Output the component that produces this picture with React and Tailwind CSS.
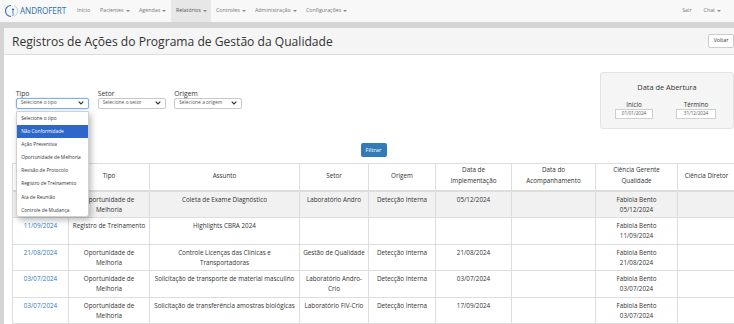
import React from "react";

const navItems = [
  { name: "Início", w: "w-[23px]" },
  { name: "Pacientes", w: "w-[39px]", caret: true },
  { name: "Agendas", w: "w-[37px]", caret: true },
  { name: "Relatórios", w: "w-[40px]", caret: true, active: true },
  { name: "Controles", w: "w-[39px]", caret: true },
  { name: "Administração", w: "w-[51px]", caret: true },
  { name: "Configurações", w: "w-[52px]", caret: true },
];

const tipoOptions = [
  "Selecione o tipo",
  "Não Conformidade",
  "Ação Preventiva",
  "Oportunidade de Melhoria",
  "Revisão de Protocolo",
  "Registro de Treinamento",
  "Ata de Reunião",
  "Controle de Mudança",
];

const columns = [
  { label: ["Data de", "Abertura"], w: "w-[56px]" },
  { label: ["Tipo"], w: "w-[81px]" },
  { label: ["Assunto"], w: "w-[150px]" },
  { label: ["Setor"], w: "w-[69px]" },
  { label: ["Origem"], w: "w-[67px]" },
  { label: ["Data de", "Implementação"], w: "w-[76px]" },
  { label: ["Data do", "Acompanhamento"], w: "w-[84px]" },
  { label: ["Ciência Gerente", "Qualidade"], w: "w-[82px]" },
  { label: ["Ciência Diretor"], w: "w-[58px]" },
];

const rows = [
  {
    hl: true,
    cells: [
      ["05/12/2024"],
      ["Oportunidade de", "Melhoria"],
      ["Coleta de Exame Diagnóstico"],
      ["Laboratório Andro"],
      ["Detecção Interna"],
      ["05/12/2024"],
      [],
      ["Fabiola Bento", "05/12/2024"],
      [],
    ],
  },
  {
    cells: [
      ["11/09/2024"],
      ["Registro de Treinamento"],
      ["Highlights CBRA 2024"],
      [],
      [],
      [],
      [],
      ["Fabiola Bento", "11/09/2024"],
      [],
    ],
  },
  {
    cells: [
      ["21/08/2024"],
      ["Oportunidade de", "Melhoria"],
      ["Controle Licenças das Clínicas e", "Transportadoras"],
      ["Gestão de Qualidade"],
      ["Detecção Interna"],
      ["21/08/2024"],
      [],
      ["Fabiola Bento", "21/08/2024"],
      [],
    ],
  },
  {
    cells: [
      ["03/07/2024"],
      ["Oportunidade de", "Melhoria"],
      ["Solicitação de transporte de material masculino"],
      ["Laboratório Andro-", "Crio"],
      ["Detecção Interna"],
      ["03/07/2024"],
      [],
      ["Fabiola Bento", "03/07/2024"],
      [],
    ],
  },
  {
    cells: [
      ["03/07/2024"],
      ["Oportunidade de", "Melhoria"],
      ["Solicitação de transferência amostras biológicas"],
      ["Laboratório FIV-Crio"],
      ["Detecção Interna"],
      ["17/09/2024"],
      [],
      ["Fabiola Bento", "03/07/2024"],
      [],
    ],
  },
];

function Caret() {
  return (
    <span className="ml-[2px] inline-block w-0 h-0 border-l-[2px] border-r-[2px] border-t-[2px] border-l-transparent border-r-transparent border-t-[#888]" />
  );
}

function Chevron() {
  return (
    <svg width="6" height="4" viewBox="0 0 6 4" className="shrink-0">
      <path d="M0.7 0.7 L3 3 L5.3 0.7" fill="none" stroke="#333" strokeWidth="1.2" />
    </svg>
  );
}

function Logo() {
  return (
    <svg width="14" height="14" viewBox="0 0 14 14" className="shrink-0">
      <path d="M6 1.5 A5.5 5.5 0 0 0 6 12.5" fill="none" stroke="#2f6db3" strokeWidth="1.1" />
      <path d="M9 1.8 A5.5 5.5 0 0 1 9.5 12" fill="none" stroke="#2f6db3" strokeWidth="0.6" opacity="0.5" />
      <circle cx="8" cy="5.5" r="1.1" fill="#2f6db3" />
      <path d="M8 6.5 C7.4 8.5 8.6 10 7.8 12" fill="none" stroke="#2f6db3" strokeWidth="0.8" />
    </svg>
  );
}

function Select({ text, w, focus }) {
  return (
    <div
      className={`${w} h-[11px] flex items-center justify-between pl-[4px] pr-[4px] bg-white rounded-[2px] border text-[4.9px] text-[#555] ${
        focus ? "border-[#7fb2e5] shadow-[0_0_2px_rgba(102,175,233,0.6)]" : "border-[#c8c8c8]"
      }`}
    >
      <span className="whitespace-nowrap">{text}</span>
      <Chevron />
    </div>
  );
}

export default function App() {
  return (
    <div className="w-[734px] h-[324px] overflow-hidden bg-[#d4d4d4] font-['Open_Sans',sans-serif] text-[#333]">
      {/* navbar */}
      <nav className="h-[22px] bg-[#f8f8f8] flex items-stretch text-[5.3px] text-[#777]">
        <div className="w-[72px] flex items-center gap-[1px] pl-[5px]">
          <Logo />
          <span className="text-[8.2px] text-[#2f6db3] tracking-[-0.1px]">ANDROFERT</span>
        </div>
        {navItems.map((item) => (
          <div
            key={item.name}
            className={`${item.w} flex items-center pl-[5px] whitespace-nowrap ${
              item.active ? "bg-[#e7e7e7] text-[#555]" : ""
            }`}
          >
            {item.name}
            {item.caret && <Caret />}
          </div>
        ))}
        <div className="ml-auto flex items-center gap-[12px] pr-[13px]">
          <span>Sair</span>
          <span className="flex items-center">
            Chat
            <Caret />
          </span>
        </div>
      </nav>

      {/* page */}
      <div className="pt-[6px] pl-[4px] h-[302px]">
        <div className="bg-white h-full w-[730px] overflow-hidden">
          {/* heading */}
          <div className="h-[27px] bg-[#f5f5f5] border-b border-[#dddddd] flex items-center justify-between pl-[8px]">
            <h1 className="text-[12.1px] pt-[2px] whitespace-nowrap">
              Registros de Ações do Programa de Gestão da Qualidade
            </h1>
            <button className="h-[14px] w-[26px] bg-white border border-[#cccccc] rounded-[2px] text-[5.3px] text-[#333]">
              Voltar
            </button>
          </div>

          {/* body */}
          <div className="pl-[8px] pt-[17px]">
            <div className="flex items-start justify-between">
              <div className="flex gap-[8.5px] ml-[3.7px] mt-[16.5px]">
                <div className="relative">
                  <div className="text-[6.8px] leading-[9px]">Tipo</div>
                  <Select text="Selecione o tipo" w="w-[73.5px]" focus />
                  <div className="absolute left-0 top-[22px] z-10 w-[73.5px] h-[106px] bg-white border border-[#d0d0d0] rounded-b-[3px] shadow-[2px_3px_6px_rgba(0,0,0,0.28)] flex flex-col text-[4.8px] text-[#333]">
                    {tipoOptions.map((opt, i) => (
                      <div
                        key={opt}
                        className={`h-[13.2px] shrink-0 flex items-center pl-[4.5px] whitespace-nowrap ${
                          i === 1 ? "bg-[#2f66c9] text-white" : ""
                        }`}
                      >
                        {opt}
                      </div>
                    ))}
                  </div>
                </div>
                <div>
                  <div className="text-[6.8px] leading-[9px]">Setor</div>
                  <Select text="Selecione o setor" w="w-[68px]" />
                </div>
                <div>
                  <div className="text-[6.8px] leading-[9px]">Origem</div>
                  <Select text="Selecione a origem" w="w-[68px]" />
                </div>
              </div>

              <div className="w-[134px] h-[57px] bg-[#f5f5f5] border border-[#e3e3e3] rounded-[3px] flex flex-col items-center">
                <div className="text-[7.4px] leading-[10px] mt-[9px]">Data de Abertura</div>
                <div className="flex gap-[23px] mt-[7.5px] pr-[3px]">
                  <div className="flex flex-col items-center">
                    <span className="text-[6.3px] leading-[9px]">Início</span>
                    <div className="w-[38px] h-[10px] bg-white border border-[#cfcfcf] flex items-center justify-center text-[4.6px] text-[#555]">
                      01/01/2024
                    </div>
                  </div>
                  <div className="flex flex-col items-center">
                    <span className="text-[6.3px] leading-[9px]">Término</span>
                    <div className="w-[40px] h-[10px] bg-white border border-[#cfcfcf] flex items-center justify-center text-[4.6px] text-[#555]">
                      31/12/2024
                    </div>
                  </div>
                </div>
              </div>
            </div>

            <div className="flex justify-center mt-[14px] pl-[1px]">
              <button className="w-[26px] h-[14px] bg-[#337ab7] text-white rounded-[2px] text-[5.8px]">
                Filtrar
              </button>
            </div>

            {/* table */}
            <div className="mt-[6px] overflow-hidden">
              <table className="table-fixed border-collapse w-[723px] text-[6.3px]">
                <thead>
                  <tr className="h-[27px]">
                    {columns.map((c, i) => (
                      <th
                        key={i}
                        className={`${c.w} font-normal border border-[#dddddd] border-b-2 align-middle pb-[4px] leading-[11px] whitespace-nowrap`}
                      >
                        {c.label.map((l, j) => (
                          <div key={j}>{l}</div>
                        ))}
                      </th>
                    ))}
                  </tr>
                </thead>
                <tbody>
                  {rows.map((r, ri) => (
                    <tr key={ri} className={`h-[26.5px] ${r.hl ? "bg-[#f1f1f1]" : "bg-white"}`}>
                      {r.cells.map((cell, ci) => (
                        <td
                          key={ci}
                          className={`border border-[#dddddd] align-top pt-[3px] leading-[10px] text-center whitespace-nowrap ${
                            ci === 0 ? "text-[#337ab7]" : ""
                          }`}
                        >
                          {cell.map((l, j) => (
                            <div key={j}>{l}</div>
                          ))}
                        </td>
                      ))}
                    </tr>
                  ))}
                </tbody>
              </table>
            </div>
          </div>
        </div>
      </div>
    </div>
  );
}
